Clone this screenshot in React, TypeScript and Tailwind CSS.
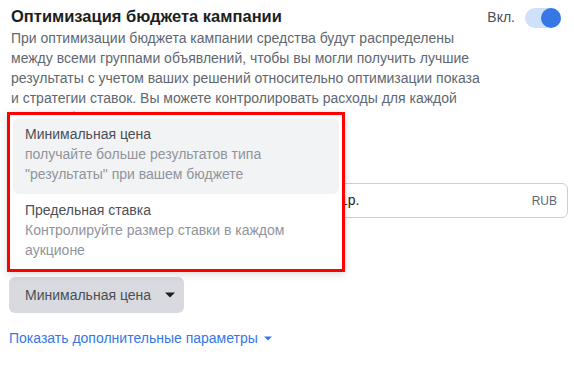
import React, { useState } from "react";

const font = { fontFamily: "'Liberation Sans', Arial, sans-serif" };

function Toggle({ on }: { on: boolean }) {
  return (
    <div
      className={`flex h-[20px] w-[36px] items-center rounded-full ${
        on ? "justify-end bg-[#cfe0fa]" : "justify-start bg-[#dadde1]"
      }`}
    >
      <div className="h-[20px] w-[20px] rounded-full bg-[#3578e5]" />
    </div>
  );
}

function Caret({ className }: { className?: string }) {
  return (
    <svg viewBox="0 0 10 6" className={className} fill="currentColor">
      <path d="M0 0.5 L10 0.5 L5 5.5 Z" />
    </svg>
  );
}

export default function App() {
  const [enabled] = useState(true);
  const [hovered, setHovered] = useState(0);

  const options = [
    {
      title: "Минимальная цена",
      desc: (
        <>
          получайте больше результатов типа
          <br />
          "результаты" при вашем бюджете
        </>
      ),
    },
    {
      title: "Предельная ставка",
      desc: (
        <>
          Контролируйте размер ставки в каждом
          <br />
          аукционе
        </>
      ),
    },
  ];

  return (
    <div className="relative h-[365px] w-[574px] overflow-hidden bg-white" style={font}>
      <div className="flex flex-col pt-[5px] pr-[6px] pl-[9px]">
        {/* header */}
        <div className="flex items-start justify-between pl-[2px]">
          <div className="text-[16.5px] leading-[22px] font-bold text-[#1c1e21]">
            Оптимизация бюджета кампании
          </div>
          <div className="flex items-center gap-[10px] pt-[2px] pr-[7px]">
            <span className="text-[14px] text-[#4b4f56]">Вкл.</span>
            <Toggle on={enabled} />
          </div>
        </div>
        <p className="pl-[2px] text-[14px] leading-[20px] text-[#606770]">
          При оптимизации бюджета кампании средства будут распределены
          <br />
          между всеми группами объявлений, чтобы вы могли получить лучшие
          <br />
          результаты с учетом ваших решений относительно оптимизации показа
          <br />
          и стратегии ставок. Вы можете контролировать расходы для каждой
          <br />
          группы объявлений.
        </p>

        {/* budget row (mostly under the menu) */}
        <div className="mt-[55px] flex h-[35px] items-center">
          <div className="w-[320px]" />
          <div className="flex h-[35px] flex-1 items-center justify-between rounded-[6px] border border-[#ccd0d5] pr-[10px] pl-[10px]">
            <span className="text-[14px] text-[#1c1e21]">1р.</span>
            <span className="text-[12px] text-[#606770]">RUB</span>
          </div>
        </div>

        {/* strategy button */}
        <div className="mt-[59px]">
          <button className="flex h-[36px] w-[175px] items-center gap-[14px] rounded-[6px] bg-[#d8dadf] pl-[16px] text-[14px] text-[#4b4f56]">
            Минимальная цена
            <Caret className="h-[6px] w-[10px] text-[#1c1e21]" />
          </button>
        </div>

        <a className="mt-[15px] flex items-center gap-[6px] text-[14px] leading-[20px] text-[#3578e5]">
          Показать дополнительные параметры
          <Caret className="h-[5px] w-[8px]" />
        </a>
      </div>

      {/* dropdown menu */}
      <div className="absolute top-[112px] left-[7px] flex h-[160px] w-[338px] flex-col border-[3px] border-[#ff0000] bg-white p-[3px] shadow-[0_2px_8px_rgba(0,0,0,0.15)]">
        {options.map((o, i) => (
          <div
            key={o.title}
            onMouseEnter={() => setHovered(i)}
            className={`rounded-[6px] px-[12px] pt-[6px] pb-[10px] text-[14px] leading-[20px] ${
              hovered === i ? "bg-[#f2f3f5]" : ""
            }`}
          >
            <div className="text-[#4b4f56]">{o.title}</div>
            <div className="text-[#90949c]">{o.desc}</div>
          </div>
        ))}
      </div>
    </div>
  );
}
